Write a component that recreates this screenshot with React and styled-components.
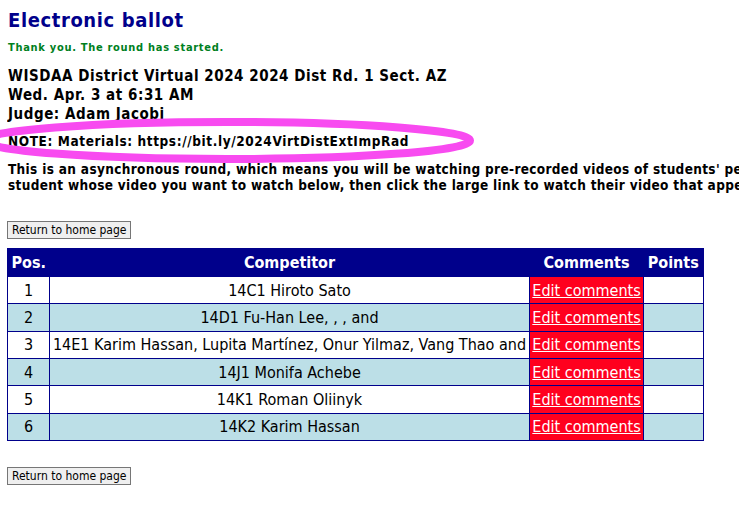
import React from 'react'
import styled, { createGlobalStyle } from 'styled-components'

const GlobalStyle = createGlobalStyle`
html, body {
    overflow: hidden;
}
body {
    margin: 8px 7px;
    background: #fff;
    font-family: Tahoma, "DejaVu Sans Condensed", "DejaVu Sans", sans-serif;
    color: #000;
}
`;

const rows = [
    { pos: 1, name: '14C1 Hiroto Sato' },
    { pos: 2, name: '14D1 Fu-Han Lee, , , and' },
    { pos: 3, name: '14E1 Karim Hassan, Lupita Martínez, Onur Yilmaz, Vang Thao and' },
    { pos: 4, name: '14J1 Monifa Achebe' },
    { pos: 5, name: '14K1 Roman Oliinyk' },
    { pos: 6, name: '14K2 Karim Hassan' },
]

function App() {
    return (
        <>
            <GlobalStyle />
            <Title>Electronic ballot</Title>
            <Thanks>Thank you. The round has started.</Thanks>
            <Info>
                WISDAA District Virtual 2024 2024 Dist Rd. 1 Sect. AZ<br />
                Wed. Apr. 3 at 6:31 AM<br />
                Judge: Adam Jacobi
            </Info>
            <Note>NOTE: Materials: https://bit.ly/2024VirtDistExtImpRad</Note>
            <Intro>
                This is an asynchronous round, which means you will be watching pre-recorded videos of students' performances. Click on the<br />
                student whose video you want to watch below, then click the large link to watch their video that appears at the top of the page.
            </Intro>

            <HomeButton>Return to home page</HomeButton>

            <Ballot>
                <colgroup>
                    <col style={{ width: 42 }} />
                    <col style={{ width: 480 }} />
                    <col style={{ width: 114 }} />
                    <col style={{ width: 60 }} />
                </colgroup>
                <thead>
                    <tr>
                        <Head>Pos.</Head>
                        <Head>Competitor</Head>
                        <Head>Comments</Head>
                        <Head>Points</Head>
                    </tr>
                </thead>
                <tbody>
                    {rows.map((r) => (
                        <Row key={r.pos} $alt={r.pos % 2 === 0}>
                            <Cell>{r.pos}</Cell>
                            <Cell>{r.name}</Cell>
                            <CommentCell>
                                <a href="#">Edit comments</a>
                            </CommentCell>
                            <Cell></Cell>
                        </Row>
                    ))}
                </tbody>
            </Ballot>

            <HomeButton $top={26}>Return to home page</HomeButton>

            {/* hand-drawn highlight over the materials link */}
            <Highlight width="746" height="512" viewBox="0 0 746 512">
                <ellipse cx="227" cy="140.5" rx="243" ry="18.5"
                    fill="none" stroke="#f84bf0" strokeWidth="8" />
            </Highlight>
        </>
    )
}

const Title = styled.h1`
margin: 0;
font-size: 20px;
line-height: 24px;
letter-spacing: 0.6px;
font-weight: bold;
color: #00008b;
padding-left: 1px;
`;

const Thanks = styled.div`
margin-top: 9px;
font-size: 11px;
line-height: 14px;
letter-spacing: 0.7px;
font-weight: bold;
color: #00801e;
padding-left: 1px;
`;

const Info = styled.div`
margin-top: 12px;
font-size: 15px;
line-height: 19px;
letter-spacing: 0.55px;
font-weight: bold;
padding-left: 1px;
`;

const Note = styled.div`
margin-top: 9px;
font-size: 13.5px;
line-height: 16px;
letter-spacing: 0.6px;
font-weight: bold;
padding-left: 1px;
`;

const Intro = styled.div`
margin-top: 12px;
font-size: 13.5px;
line-height: 16px;
letter-spacing: 0.33px;
font-weight: bold;
white-space: nowrap;
padding-left: 1px;
`;

const HomeButton = styled.button`
display: block;
margin-top: ${(p) => p.$top ?? 28}px;
height: 18px;
padding: 0 4px;
font-family: inherit;
font-size: 12px;
line-height: 14px;
color: #000;
background: #efefef;
border: 1px solid #767676;
border-radius: 0;
`;

const Ballot = styled.table`
margin-top: 9px;
width: 696px;
table-layout: fixed;
border-collapse: collapse;
border: 1px solid #00008b;
font-size: 16px;
`;

const Head = styled.th`
background: #00008b;
color: #fff;
font-weight: bold;
height: 27px;
padding: 0;
text-align: center;
white-space: nowrap;
`;

const Row = styled.tr`
background: ${(p) => (p.$alt ? '#bcdfe7' : '#fff')};
`;

const Cell = styled.td`
height: 26.33px;
padding: 0;
border: 1px solid #00008b;
text-align: center;
white-space: nowrap;
overflow: hidden;
`;

const CommentCell = styled(Cell)`
background: #ff001e;

a {
    color: #fff;
    text-decoration: underline;
}
`;

const Highlight = styled.svg`
position: absolute;
top: 0;
left: 0;
pointer-events: none;
`;

export default App
